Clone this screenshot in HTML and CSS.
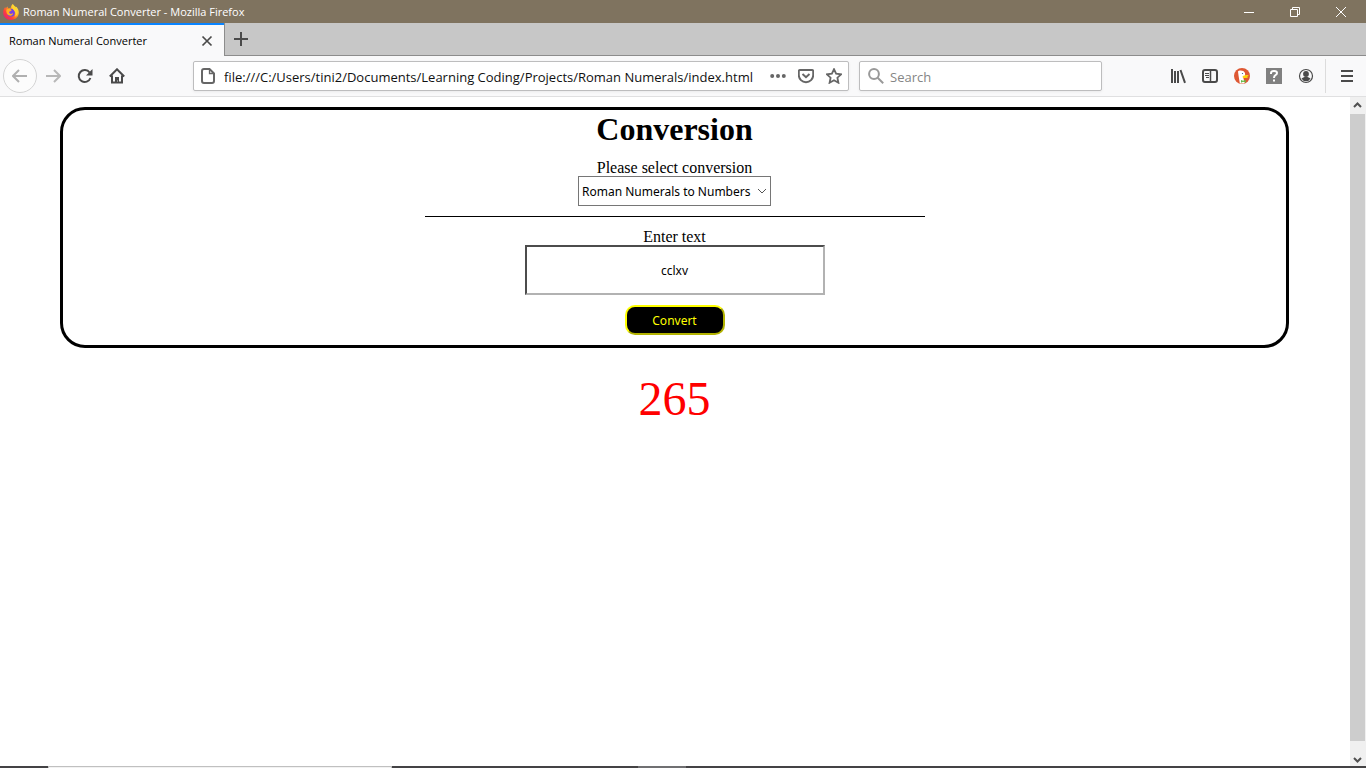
FILE: index.html
```html
<!DOCTYPE html>
<html lang="en">
<head>
<meta charset="utf-8">
<title>Roman Numeral Converter</title>
<link rel="stylesheet" href="styles.css">
</head>
<body>
<div class="window">
  <header class="titlebar">
    <svg class="logo" viewBox="0 0 16 16" width="16" height="16" aria-hidden="true">
      <defs>
        <linearGradient id="flame" x1="0.9" y1="0.1" x2="0.1" y2="0.9">
          <stop offset="0" stop-color="#fff04a"/><stop offset="0.4" stop-color="#ffa01f"/><stop offset="0.7" stop-color="#ff4338"/><stop offset="1" stop-color="#e81a78"/>
        </linearGradient>
      </defs>
      <path fill="url(#flame)" d="M8 16C3.500 16 .2 12.700 .2 8.500c0-2.300.8-4.100 2-5.500l.5 1.500C3.400 3.400 4 2.800 4.700 2.500l.3 2c.9-.3 2-.2 2.600 0 .3-2 1-3.400 2.300-4.400.6 1.800 1.500 2.500 2.600 3.300l.2-.8c1.900 1.300 3.100 3.400 3.100 6C15.800 12.800 12.400 16 8 16z"/>
      <circle cx="8" cy="8.700" r="3.900" fill="#7542e5"/>
      <path fill="#ffae20" d="M3.500 5.500c1.200-1 2.800-1 4-.6l1.100 1.400c-.2.800-1.300.9-2 1.300-.5.400-.6 1.300.2 1.900 1.100.8 2.600.2 3.300-.5-.2 2-1.800 3-3.700 2.600C4 11 2.900 8 3.500 5.500z"/>
      <path fill="#ffd52f" d="M9.900.1c.6 1.800 4.300 3 4.800 6.900.4 3.100-1 5-3 5.800 1.200-1.900 1.200-3.900.1-5.400C10 5.400 8.200 4 9.900.1z"/>
    </svg>
    <span class="window-title">Roman Numeral Converter - Mozilla Firefox</span>
    <div class="window-controls">
      <button aria-label="Minimize"><svg viewBox="0 0 12 12" width="12" height="12"><path d="M1 6.500h10"/></svg></button>
      <button aria-label="Restore"><svg viewBox="0 0 12 12" width="12" height="12"><path d="M1.500 3.500h7v7h-7zM3.500 3.500v-2h7v7h-2"/></svg></button>
      <button aria-label="Close"><svg viewBox="0 0 12 12" width="12" height="12"><path d="M1 1l10 10M11 1L1 11"/></svg></button>
    </div>
  </header>

  <div class="tabstrip">
    <div class="tab">
      <span>Roman Numeral Converter</span>
      <button class="icon" aria-label="Close tab"><svg viewBox="0 0 16 16" width="16" height="16"><path d="M3.500 3.500l9 9M12.500 3.500l-9 9" stroke-width="1.700"/></svg></button>
    </div>
    <div class="strip-rest">
      <button class="icon" aria-label="New tab"><svg viewBox="0 0 16 16" width="16" height="16"><path d="M8 1v14M1 8h14"/></svg></button>
    </div>
  </div>

  <nav class="toolbar">
    <div class="nav-buttons">
      <button class="icon back" aria-label="Back"><svg viewBox="0 0 16 16" width="16" height="16"><path d="M15 8H1.500M7 2L1 8l6 6"/></svg></button>
      <button class="icon faded" aria-label="Forward"><svg viewBox="0 0 16 16" width="16" height="16"><path d="M1 8h13.500M9 2l6 6-6 6"/></svg></button>
      <button class="icon" aria-label="Reload"><svg viewBox="0 0 16 16" width="16" height="16"><path d="M13.400 10A6 6 0 1 1 12.600 4.500"/><path class="solid" d="M15.500 1v6.500H9z"/></svg></button>
      <button class="icon" aria-label="Home"><svg viewBox="0 0 16 16" width="16" height="16"><path d="M.8 8.500L8 1.300l7.200 7.200M3 7.500V14.500h10V7.500"/><path class="solid" d="M6 9h4v5.500H8.800v-2H8v2H6z"/></svg></button>
    </div>
    <div class="field address">
      <svg class="icon" viewBox="0 0 16 16" width="16" height="16"><path d="M4 1h5.500L14 5.500V13a2 2 0 0 1-2 2H4a2 2 0 0 1-2-2V3a2 2 0 0 1 2-2z"/><path d="M9.500 1v4.500H14" stroke-width="1.300"/></svg>
      <input type="text" aria-label="Address" value="file:///C:/Users/tini2/Documents/Learning Coding/Projects/Roman Numerals/index.html">
      <button class="icon" aria-label="Page actions"><svg viewBox="0 0 16 16" width="16" height="16"><circle class="solid" cx="2.200" cy="8" r="2"/><circle class="solid" cx="8" cy="8" r="2"/><circle class="solid" cx="13.800" cy="8" r="2"/></svg></button>
      <button class="icon" aria-label="Save to Pocket"><svg viewBox="0 0 16 16" width="16" height="16"><path d="M2 2h12a1.200 1.200 0 0 1 1.200 1.200V7A7.200 7.200 0 0 1 .8 7V3.200A1.200 1.200 0 0 1 2 2zM4.500 6L8 9.300 11.500 6" stroke-width="1.900"/></svg></button>
      <button class="icon" aria-label="Bookmark"><svg viewBox="0 0 16 16" width="16" height="16"><path d="M8 1.200l2.100 4.500 5 .6-3.700 3.400 1 5L8 12.200l-4.400 2.500 1-5L.9 6.300l5-.6z" stroke-width="1.800"/></svg></button>
    </div>
    <div class="field search">
      <svg class="icon glass" viewBox="0 0 16 16" width="16" height="16"><circle cx="6" cy="6" r="4.900"/><path d="M9.700 9.700l5.500 5.500"/></svg>
      <input type="text" aria-label="Search" placeholder="Search">
    </div>
    <div class="tools">
      <button class="icon" aria-label="Library"><svg viewBox="0 0 16 16" width="16" height="16"><path d="M2 1v14M5 3v12M8 3v12M10.500 2L15 14.800"/></svg></button>
      <button class="icon" aria-label="Sidebars"><svg viewBox="0 0 16 16" width="16" height="16"><rect x="1" y="2" width="14" height="12" rx="2"/><path d="M8.500 2v12" stroke-width="1.500"/><path d="M3 5.500h4M3 7.500h4M4 9.500h3" stroke-width="1"/></svg></button>
      <button class="icon" aria-label="DuckDuckGo"><svg class="art" viewBox="0 0 16 16" width="16" height="16"><circle cx="8" cy="8" r="8" fill="#de5833"/><path fill="#fff" d="M4 3.500C5 1.800 10 2 11 5l.2 3.500-2 1 1.600 5.500c-1.600.7-3.400.7-5 .2L4.600 8z"/><path fill="#fdd20a" d="M9 8c1.600-1 3.800-1.100 6-1l-2 1.600 1.600.1c-.6 1.100-3 1.700-5 1.300-1-.3-1.400-1.400-.6-2z"/><path fill="#65bc46" d="M7 12l2 .8 2.600-.8.300 2.400-2.900-.6-2 .9z"/><circle cx="8.500" cy="5.500" r=".6" fill="#2d4f8e"/></svg></button>
      <button class="icon" aria-label="Help"><svg class="art" viewBox="0 0 16 16" width="16" height="16"><path fill="#808080" d="M0 0h16v16H0z"/><path d="M5 6V5q0-2 3-2t3 2q0 1.500-1.500 2.200Q8 8 8 10" fill="none" stroke="#fff" stroke-width="2"/><path fill="#fff" d="M7 11.500h2v2H7z"/></svg></button>
      <button class="icon" aria-label="Account"><svg viewBox="0 0 16 16" width="16" height="16"><circle cx="8" cy="8" r="6.500" stroke-width="1.200"/><circle class="solid" cx="8" cy="6" r="2.900"/><path class="solid" d="M3.500 10.500q2-1.500 3-1.500h3q1 0 3 1.500-1.500 2.800-4.500 2.800t-4.500-2.800z"/></svg></button>
    </div>
    <div class="menu">
      <button class="icon" aria-label="Open menu"><svg viewBox="0 0 16 16" width="16" height="16"><path d="M2 3h12M2 8h12M2 13h12"/></svg></button>
    </div>
  </nav>

  <div class="viewport">
    <main class="page">
      <form class="converter">
        <h1>Conversion</h1>
        <label for="mode">Please select conversion</label>
        <div class="select-wrap">
          <select id="mode"><option>Roman Numerals to Numbers</option><option>Numbers to Roman Numerals</option></select>
          <svg viewBox="0 0 10 10" width="10" height="10" aria-hidden="true"><path d="M1 3l4 4 4-4"/></svg>
        </div>
        <hr>
        <label for="text">Enter text</label>
        <input id="text" class="entry" type="text" value="cclxv">
        <button class="convert" type="button">Convert</button>
      </form>
      <output class="result" for="text">265</output>
    </main>
    <div class="scrollbar" aria-hidden="true">
      <svg viewBox="0 0 9 9" width="9" height="9"><path d="M1 6l3.500-3.500L8 6"/></svg>
      <div class="thumb"></div>
      <svg viewBox="0 0 9 9" width="9" height="9"><path d="M1 3l3.500 3.500L8 3"/></svg>
    </div>
  </div>
  <footer class="taskbar"><span class="task-field"></span><span class="task-active"></span></footer>
</div>
</body>
</html>
```
FILE: styles.css
```css
* { box-sizing: border-box; }
body { margin: 0; font-family: "Liberation Serif", "Times New Roman", serif; color: #000; }
button { border: 0; padding: 0; background: none; font: inherit; }
.window { display: flex; flex-direction: column; height: 100vh; overflow: hidden; background: #fff; }

.titlebar, .tabstrip, .toolbar { font-family: "Open Sans", "Segoe UI", sans-serif; flex: none; }
.titlebar { display: flex; align-items: center; height: 23px; padding-left: 3px; background: #7f735f; color: #fff; font-size: 11px; }
.logo { margin-right: 4px; }
.window-controls { display: flex; margin-left: auto; height: 20px; padding-right: 2px; }
.window-controls button { display: grid; place-items: center; width: 46px; }
.window-controls svg { fill: none; stroke: #fff; stroke-width: 1; }

.icon { display: grid; place-items: center; flex: none; color: #4a4a4a; }
.icon svg, svg.icon { fill: none; stroke: currentColor; stroke-width: 2; }
.icon .solid { fill: currentColor; stroke: none; }
.icon .art { stroke: none; }

.tabstrip { display: flex; height: 33px; }
.tab { display: flex; align-items: center; justify-content: space-between; width: 224px; padding: 0 9px; border-top: 2px solid #0a84ff; background: #f9f9fa; font-size: 11px; }
.strip-rest { display: flex; flex: 1; padding-left: 8px; border-left: 1px solid #8c8c8c; border-bottom: 1px solid #8c8c8c; background: #c7c7c7; }

.toolbar { display: flex; align-items: center; height: 41px; border-bottom: 1px solid #e0e0e1; background: #f9f9fa; }
.nav-buttons { display: flex; align-items: center; padding-left: 3px; }
.nav-buttons .icon { width: 32px; height: 32px; }
.nav-buttons .back { width: 34px; height: 34px; border: 1px solid #d4d4d4; border-radius: 50%; background: #fcfcfc; color: #b0b0b0; }
.nav-buttons .faded { color: #b8b8b8; }
.field { display: flex; align-items: center; height: 30px; border: 1px solid #bdbdbe; border-radius: 2px; background: #fff; box-shadow: 0 1px 3px #00000010; }
.field input { flex: 1; min-width: 0; border: 0; padding: 1px 0 0; outline: 0; background: none; font: 13px "Open Sans", "Segoe UI", sans-serif; color: #111; }
.field input::placeholder { color: #858585; opacity: 1; }
.field .icon { color: #666; }
.address { flex: 642; gap: 12px; margin-left: 60px; padding: 0 6px; }
.address input { margin-left: -4px; }
.search { flex: 225; gap: 6px; margin-left: 10px; padding: 0 8px; }
.field .glass { color: #999; }
.tools { display: flex; gap: 16px; margin-left: 68px; padding-right: 11px; }
.menu { display: flex; align-items: center; height: 34px; padding: 0 11px 0 13px; border-left: 1px solid #dcdcdc; }

.viewport { display: flex; flex: 1; min-height: 0; }
.page { display: flex; flex-direction: column; align-items: center; flex: 1; padding: 10px 1px 0 0; }
.converter { display: flex; flex-direction: column; align-items: center; width: calc(100% - 120px); padding-bottom: 10px; border: 3px solid #000; border-radius: 25px; font-size: 16px; line-height: 17px; }
h1 { margin: 1px 0 12px; font-size: 32px; line-height: 36px; }
.select-wrap { display: grid; align-items: center; }
.select-wrap > * { grid-area: 1 / 1; }
.select-wrap svg { justify-self: end; margin-right: 4px; fill: none; stroke: #555; pointer-events: none; }
select, .entry, .convert { font: 12px "Noto Sans", Tahoma, sans-serif; }
select { appearance: none; width: 193px; height: 30px; padding: 0 3px; border: 1px solid #767676; border-radius: 0; background: #fff; color: #000; }
hr { width: 500px; margin: 10px 0 11px; border: 0; border-top: 1px solid #000; }
.entry { width: 300px; height: 50px; border: 2px solid; border-color: #4c4c4c #b2b2b2 #b2b2b2 #4c4c4c; text-align: center; color: #000; }
.converter .convert { width: 100px; height: 30px; margin-top: 10px; border: 2px solid; border-color: #ff0 #b2b200 #b2b200 #ff0; border-radius: 10px; background: #000; color: #ff0; }
.result { margin-top: 23px; color: red; font-size: 48px; line-height: 55px; }

.scrollbar { display: flex; flex-direction: column; align-items: center; gap: 4px; width: 16px; padding: 4px 1px 2px 0; background: #f0f0f0; }
.scrollbar svg { flex: none; fill: none; stroke: #505050; stroke-width: 2; }
.thumb { width: 100%; flex: 1; margin-bottom: 10px; background: #cdcdcd; }
.taskbar { display: flex; flex: none; height: 2px; background: #444345; }
.task-field { width: 344px; margin-left: 48px; background: #f2f2f2; border: 1px solid #c0c0c0; border-bottom: 0; }
.task-active { width: 48px; margin-left: 246px; background: #707072; }
```
